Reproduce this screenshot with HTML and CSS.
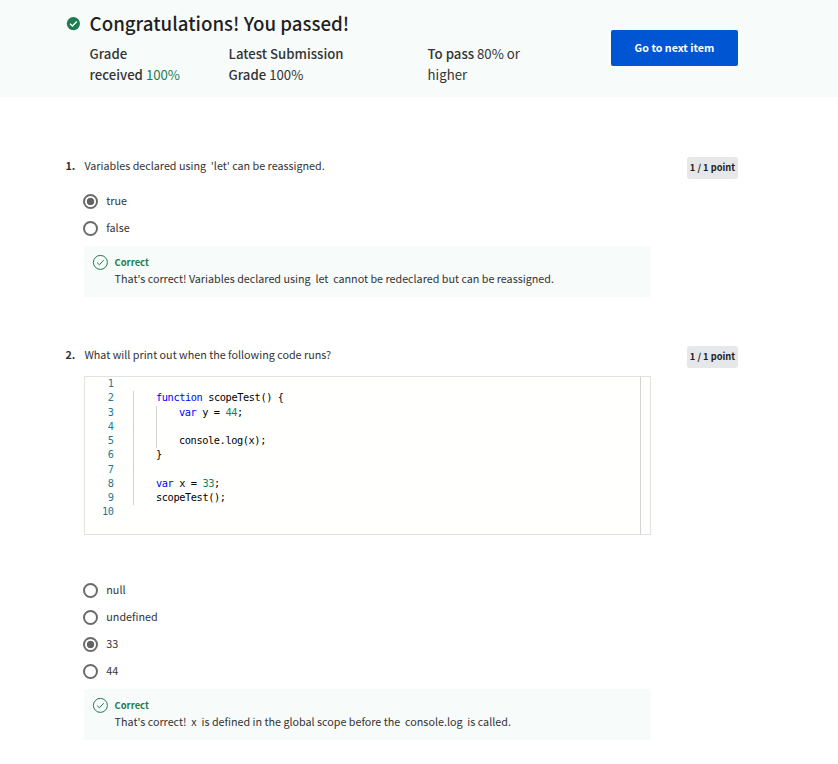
FILE: index.html
```html
<!DOCTYPE html>
<html lang="en">
<head>
<meta charset="utf-8">
<title>Quiz results</title>
<link rel="stylesheet" href="styles.css">
</head>
<body>
<header class="banner">
  <svg class="passed" viewBox="0 0 14 14"><circle cx="7.4" cy="6.6" r="6.6" fill="#1d7c50"/><path d="M4.1 6.8l2.3 2.2 4.4-4.5" fill="none" stroke="#fff" stroke-width="1.4"/></svg>
  <div class="summary">
    <h1>Congratulations! You passed!</h1>
    <div class="grades">
      <div class="grade first"><b>Grade<br>received</b> <span class="green">100%</span></div>
      <div class="grade second"><b>Latest Submission<br>Grade</b> 100%</div>
      <div class="grade"><b>To pass</b> 80% or<br>higher</div>
    </div>
  </div>
  <button class="next">Go to next item</button>
</header>
<main>
  <section class="question q1">
    <div class="number">1.</div>
    <div class="body">
      <p class="prompt">Variables declared using&nbsp; 'let' can be reassigned.</p>
      <div class="options">
        <div class="option"><i class="radio on"></i><span>true</span></div>
        <div class="option"><i class="radio"></i><span>false</span></div>
      </div>
      <div class="feedback">
        <svg class="tick" viewBox="0 0 16 16"><circle cx="8.4" cy="8.4" r="7"/><path d="M5.1 8.6l2.3 2.2 4.3-4.6"/></svg>
        <div><strong>Correct</strong><p>That's correct! Variables declared using&nbsp; let&nbsp; cannot be redeclared but can be reassigned.</p></div>
      </div>
    </div>
    <div class="points">1 / 1 point</div>
  </section>
  <section class="question q2">
    <div class="number">2.</div>
    <div class="body">
      <p class="prompt">What will print out when the following code runs?</p>
      <div class="editor">
        <div class="gutter"><span>1</span><span>2</span><span>3</span><span>4</span><span>5</span><span>6</span><span>7</span><span>8</span><span>9</span><span>10</span></div>
        <div class="code">
          <div class="line"></div>
          <div class="guide">
            <div class="line"><em>function</em> scopeTest() {</div>
            <div class="guide inner">
              <div class="line"><em>var</em> y = <u>44</u>;</div>
              <div class="line"></div>
              <div class="line">console.log(x);</div>
            </div>
            <div class="line">}</div>
            <div class="line"></div>
            <div class="line"><em>var</em> x = <u>33</u>;</div>
            <div class="line">scopeTest();</div>
          </div>
        </div>
        <div class="ruler"></div>
      </div>
      <div class="options">
        <div class="option"><i class="radio"></i><span>null</span></div>
        <div class="option"><i class="radio"></i><span>undefined</span></div>
        <div class="option"><i class="radio on"></i><span>33</span></div>
        <div class="option"><i class="radio"></i><span>44</span></div>
      </div>
      <div class="feedback">
        <svg class="tick" viewBox="0 0 16 16"><circle cx="8.4" cy="8.4" r="7"/><path d="M5.1 8.6l2.3 2.2 4.3-4.6"/></svg>
        <div><strong>Correct</strong><p>That's correct!&nbsp; x&nbsp; is defined in the global scope before the&nbsp; console.log&nbsp; is called.</p></div>
      </div>
    </div>
    <div class="points">1 / 1 point</div>
  </section>
</main>
</body>
</html>
```
FILE: styles.css
```css
* { box-sizing: border-box; }
body {
  margin: 0;
  background: #fff;
  color: #333;
  font: 10.75px/17px "Noto Sans CJK SC", "Open Sans", sans-serif;
}
p, h1 { margin: 0; }
.banner {
  display: flex;
  height: 97px;
  padding-left: 66px;
  background: #f7fbfa;
}
.passed { width: 14px; height: 14px; margin: 17px 9.6px 0 0; flex: none; }
.summary { width: 521.4px; padding-top: 9px; }
h1 {
  font-size: 18.7px;
  line-height: 28px;
  font-weight: 500;
  color: #1f1f1f;
  white-space: nowrap;
}
.grades { display: flex; margin-top: 6px; font-size: 13.2px; line-height: 21px; white-space: nowrap; }
.grade b { font-weight: 500; color: #333; }
.first { width: 139px; }
.second { width: 199px; }
.green { color: #1d7c50; }
.next {
  width: 127px;
  height: 36px;
  margin-top: 30px;
  padding: 0;
  border: 0;
  border-radius: 2px;
  background: #0056d2;
  color: #fff;
  font: 700 10.7px/18px "Noto Sans CJK SC", "Open Sans", sans-serif;
}
.question { display: flex; padding-left: 65.5px; }
.q1 { padding-top: 60px; }
.q2 { padding-top: 49px; }
.number { width: 18.5px; font-weight: 700; line-height: 17px; }
.body { width: 567px; }
.prompt { padding-left: 0.4px; line-height: 17px; white-space: nowrap; }
.q1 .options { padding-top: 13px; }
.q2 .options { padding-top: 41px; }
.option { display: flex; align-items: center; height: 27px; margin-left: -0.7px; }
.radio {
  width: 15px;
  height: 15px;
  margin: 1px 8px 0 0;
  border: 2px solid #6b6b6b;
  border-radius: 50%;
}
.on { background: radial-gradient(circle, #636363 3.4px, transparent 4.1px); }
.feedback {
  display: flex;
  height: 51px;
  margin-top: 5px;
  padding: 7px 0 0 8px;
  background: #f7fbfa;
  white-space: nowrap;
}
.feedback strong { display: block; padding-top: 1px; color: #1d7c50; font-size: 9.4px; line-height: 16px; }
.feedback p { line-height: 17px; }
.tick { width: 16px; height: 16px; margin: 1px 6.6px 0 0; fill: none; stroke: #1d7c50; stroke-width: 1; }
.points {
  width: 51px;
  height: 22px;
  margin-left: 36px;
  border-radius: 3px;
  background: #e5e7e8;
  color: #1f1f1f;
  font-size: 9.3px;
  font-weight: 700;
  line-height: 21px;
  text-align: center;
  white-space: nowrap;
}
.editor {
  display: flex;
  height: 159px;
  margin-top: 13px;
  border: 1px solid #e1e3e3;
  background: #fffffe;
  color: #000;
  font: 10.3px/12.25px "DejaVu Sans Mono", monospace;
  letter-spacing: -0.4px;
}
.gutter { display: flex; flex-direction: column; width: 28.6px; text-align: right; color: #237893; }
.gutter span { height: 14.25px; }
.code { width: 526.4px; padding-left: 19.4px; }
.line { height: 14.25px; padding-left: 22px; }
.guide { border-left: 1px solid #d3d3d3; }
.inner { margin-left: 22px; }
.code em { color: #00f; font-style: normal; }
.code u { color: #098658; text-decoration: none; }
.ruler { flex: 1; border-left: 1px solid #d3d3d3; }
```
